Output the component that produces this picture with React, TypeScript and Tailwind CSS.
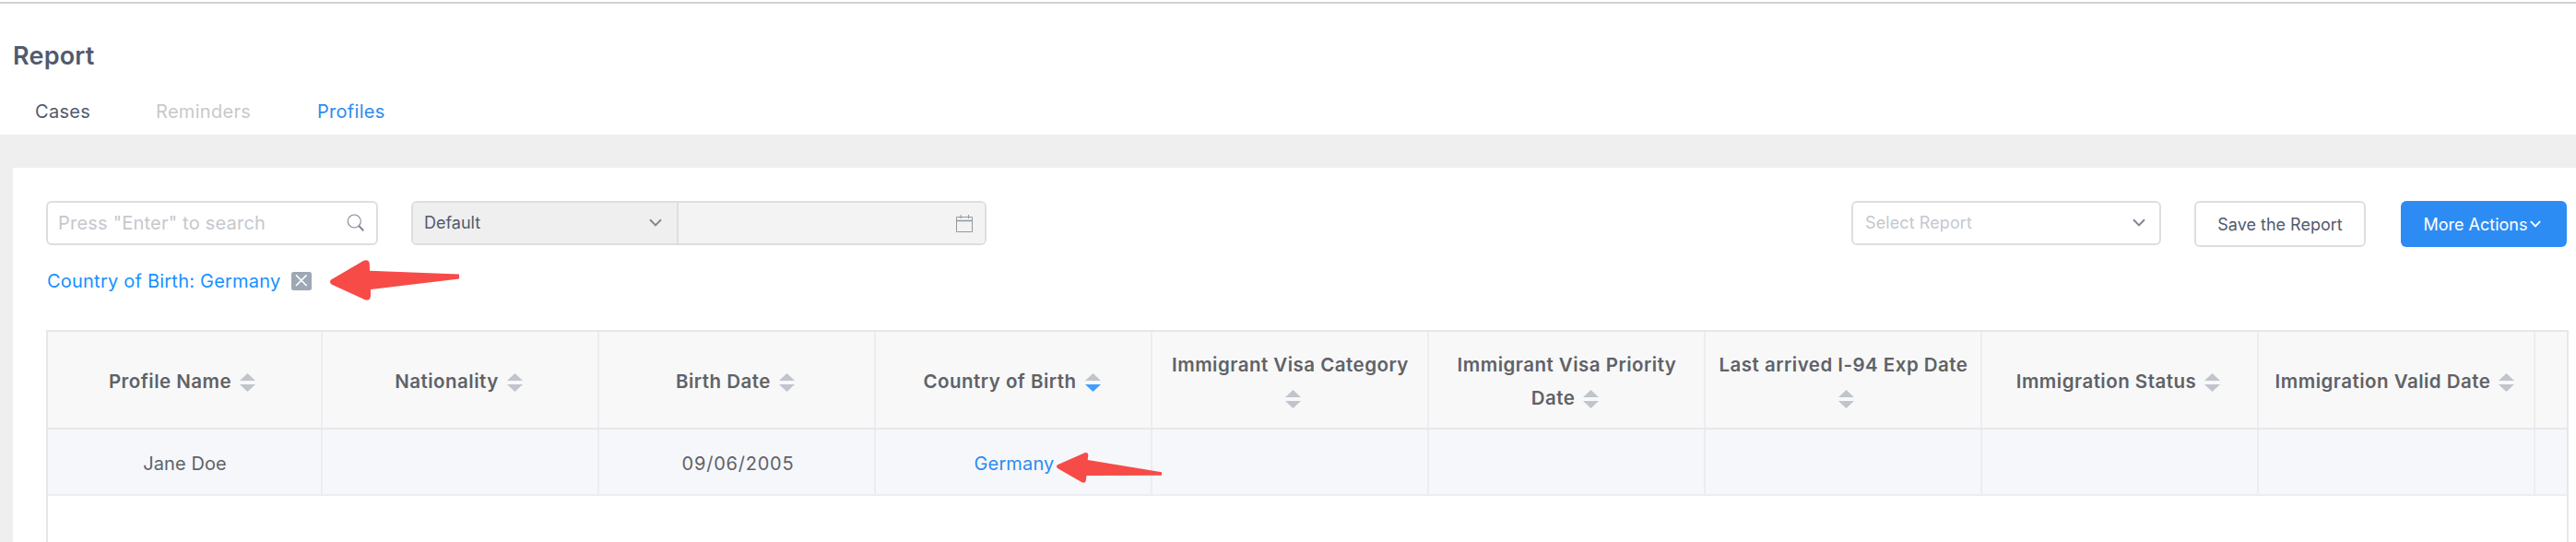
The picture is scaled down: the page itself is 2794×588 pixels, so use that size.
import React from 'react';
import { clsx } from 'clsx';

type SortOrder = 'asc' | 'desc' | null;

interface Column {
    label: string;
    value: string;
    sort?: SortOrder;
    link?: boolean;
    valueClass?: string;
}

const columns: Column[] = [
    { label: 'Profile Name', value: 'Jane Doe', valueClass: 'tracking-[0.1px] pl-[3px]' },
    { label: 'Nationality', value: '' },
    { label: 'Birth Date', value: '09/06/2005', valueClass: 'tracking-[0.78px] pl-[3px]' },
    { label: 'Country of Birth', value: 'Germany', sort: 'desc', link: true, valueClass: 'tracking-[0.15px] pl-[2px]' },
    { label: 'Immigrant Visa Category', value: '' },
    { label: 'Immigrant Visa Priority Date', value: '' },
    { label: 'Last arrived I-94 Exp Date', value: '' },
    { label: 'Immigration Status', value: '' },
    { label: 'Immigration Valid Date', value: '' },
];

const Chevron = ({ className, strokeWidth = 2 }: { className?: string; strokeWidth?: number }) => (
    <svg viewBox="0 0 14 9" fill="none" stroke="currentColor" strokeWidth={strokeWidth} className={className}>
        <path d="M1 1.2 L7 7.4 L13 1.2" />
    </svg>
);

const SearchIcon = () => (
    <svg width="20" height="20" viewBox="0 0 20 20" fill="none" stroke="#808695">
        <circle cx="8.3" cy="8" r="7" strokeWidth="1.1" />
        <path d="M13.2 13 L18.3 18.2" strokeWidth="2" />
    </svg>
);

const CalendarIcon = () => (
    <svg width="20" height="20" viewBox="0 0 20 20" fill="none" stroke="#9197a3" strokeWidth="1">
        <path d="M1.5 3.5 H18.5 V19.5 H1.5 Z" />
        <path d="M1.5 7.5 H18.5" strokeWidth="1.6" />
        <path d="M6 1 V5 M14.5 1 V5" />
    </svg>
);

const SortCaret = ({ order }: { order?: SortOrder }) => (
    <span className="inline-block pl-[9px] pr-[4px] align-middle">
        <svg width="17" height="20" viewBox="0 0 17 20" className="block">
            <path d="M8.5 0 L17 8 H0 Z" fill={order === 'asc' ? '#409eff' : '#c0c4cc'} />
            <path d="M0 12 H17 L8.5 20 Z" fill={order === 'desc' ? '#409eff' : '#c0c4cc'} />
        </svg>
    </span>
);

const PageHeader = () => (
    <header className="mt-[2px] h-[144px] border-t-2 border-[#d2d2d2] bg-white">
        <h1 className="pt-[39px] pl-[14px] text-[27px] leading-[36px] font-semibold tracking-[0.2px] text-[#515a6e]">
            Report
        </h1>
        <nav className="flex pt-[24px] pl-[38px] text-[20px] leading-[36px] tracking-[0.3px] text-[#515a6e]">
            <a className="w-[131px]">Cases</a>
            <a className="w-[175px] text-[#c8c9cc]">Reminders</a>
            <a className="text-[#2d8cf0]">Profiles</a>
        </nav>
    </header>
);

const Toolbar = () => (
    <div className="flex items-start pr-[10px] text-[18px] text-[#515a6e]">
        <div className="flex h-12 w-[360px] items-center justify-between rounded-md border-2 border-[#dcdee2] pr-[12px] pl-[11px]">
            <span className="text-[20px] tracking-[0.22px] text-[#c5c8ce]">Press "Enter" to search</span>
            <SearchIcon />
        </div>
        <div className="ml-9 flex h-12 w-[624px] overflow-hidden rounded-md border-2 border-[#dcdee2]">
            <div className="flex w-[288px] items-center justify-between border-r-2 border-[#dcdee2] bg-[#efefef] pr-[16px] pb-px pl-3">
                <span>Default</span>
                <Chevron className="h-[9px] w-[14px] text-[#808695]" />
            </div>
            <div className="flex flex-1 items-center justify-end bg-[#f3f3f3] pr-[12px]">
                <CalendarIcon />
            </div>
        </div>
        <div className="ml-auto flex h-12 w-[336px] items-center justify-between rounded-md border-2 border-[#dcdee2] pr-[15px] pb-px pl-[13px]">
            <span className="tracking-[0.1px] text-[#c5c8ce]">Select Report</span>
            <Chevron className="h-[9px] w-[14px] text-[#808695]" />
        </div>
        <button className="ml-9 h-[50px] w-[186px] rounded-md border-2 border-[#dcdee2]">Save the Report</button>
        <button className="ml-[38px] flex h-[50px] w-[180px] items-center justify-center gap-[3px] rounded-md bg-[#2d8cf4] pr-[3px] text-white">
            More Actions
            <Chevron className="h-[8px] w-[12px]" strokeWidth={2.2} />
        </button>
    </div>
);

const ActiveFilter = () => (
    <div className="mt-[19px] flex h-9 items-center">
        <span className="pl-px text-[20px] tracking-[0.22px] text-[#1890ff]">Country of Birth: Germany</span>
        <svg width="22" height="20" viewBox="0 0 22 20" className="ml-3">
            <rect width="22" height="20" rx="2.5" fill="#9ea7b4" />
            <path d="M5 3.4 L16.6 15 M16.6 3.4 L5 15" stroke="#fff" strokeWidth="1.6" />
        </svg>
    </div>
);

const cellBase = 'w-[300px] shrink-0 flex items-center justify-center border-r-2 px-3 text-center';

const ProfileTable = () => (
    <div className="mt-[35px] mr-2 flex-1 overflow-hidden border-x-2 border-t-2 border-[#e4e8ed] text-[20px]">
        <div className="-ml-[2px] flex h-[106px] border-b-2 border-[#e6e8eb] bg-[#f8f8f8] font-semibold text-[#606266]">
            {columns.map((col) => (
                <div key={col.label} className={clsx(cellBase, 'border-[#ebedf0] pt-[3px] text-[20.5px] leading-9 tracking-[0.48px]')}>
                    <div className="pl-px">
                        {col.label}
                        <SortCaret order={col.sort} />
                    </div>
                </div>
            ))}
        </div>
        <div className="-ml-[2px] flex h-[72px] border-b-2 border-[#ebeef2] bg-[#f5f7fb] text-[#606266]">
            {columns.map((col) => (
                <div key={col.label} className={clsx(cellBase, 'border-[#ebedf1] pt-[3px]')}>
                    <span className={clsx(col.valueClass, col.link && 'text-[#2d8cf0]')}>{col.value}</span>
                </div>
            ))}
        </div>
    </div>
);

// hand-drawn pointers that float above the page
const Pointers = () => (
    <>
        <svg width="144" height="48" viewBox="356 280 144 48" className="absolute top-[280px] left-[356px]" fill="#f64b47">
            <path d="M359 303.5 L394.5 282.8 Q400 280.8 400.8 286 L401 293.8 L498 297.6 V302.4 L402 314 V321 Q401.5 327 396 325.2 L359.5 308.5 Q356.8 306 359 303.5 Z" />
        </svg>
        <svg width="118" height="38" viewBox="1144 488 118 38" className="absolute top-[488px] left-[1144px]" fill="#f64b47">
            <path d="M1147 504.3 L1176.5 491.3 Q1180.5 490.3 1180.3 494 L1179.7 499 L1260 512.2 V515.7 L1178.5 516 L1177.8 521.5 Q1177 524.8 1173.5 523.3 L1147 508 Q1145 506 1147 504.3 Z" />
        </svg>
    </>
);

export default function App() {
    return (
        <div className="relative flex h-[588px] flex-col overflow-hidden bg-white font-[Inter,sans-serif]">
            <PageHeader />
            <main className="flex flex-1 flex-col bg-[#efefef] pt-9 pl-[14px]">
                <section className="flex flex-1 flex-col bg-white pt-9 pl-9">
                    <Toolbar />
                    <ActiveFilter />
                    <ProfileTable />
                </section>
            </main>
            <Pointers />
        </div>
    );
}
